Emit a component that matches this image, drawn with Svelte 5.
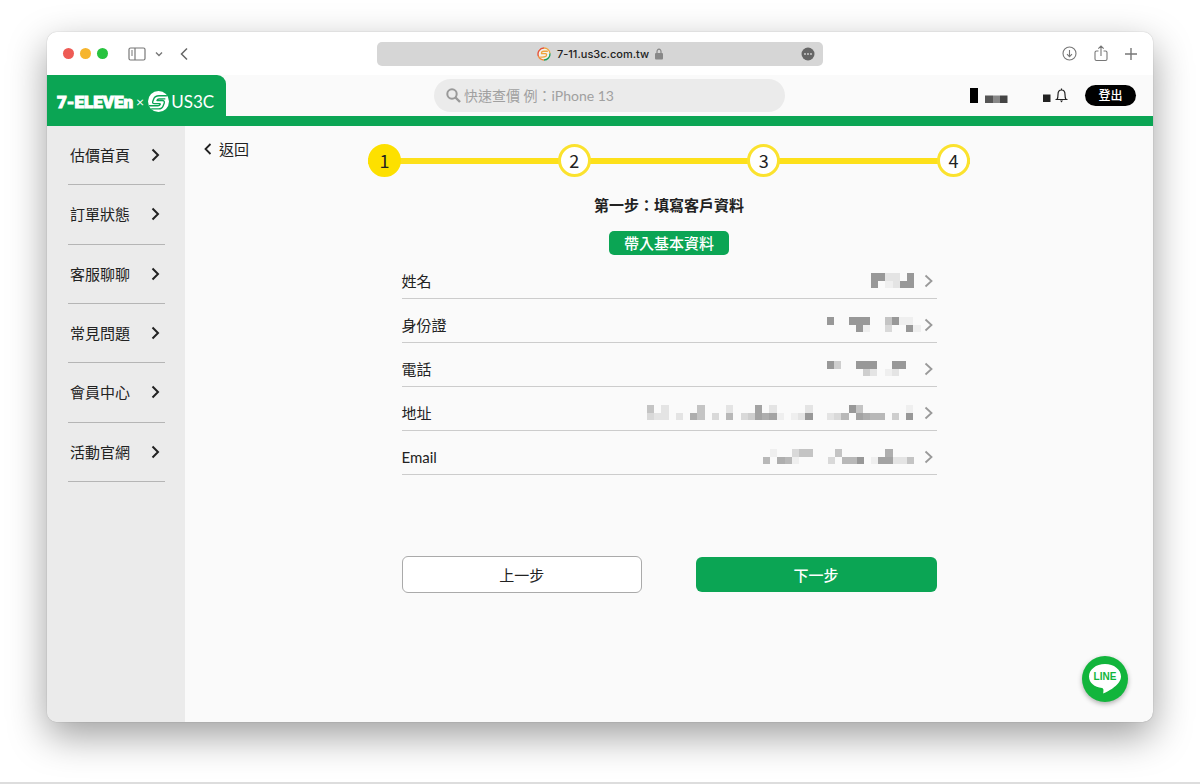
<script>
  const menu = ["估價首頁", "訂單狀態", "客服聊聊", "常見問題", "會員中心", "活動官網"];
  const steps = [1, 2, 3, 4];
  let current = $state(1);
  let keyword = $state("");

  // masked values: two rows of cells, each digit is how dark the cell is
  const fields = [
    { label: "姓名", mask: ["9922090", "9012990"] },
    { label: "身份證", mask: ["9009990059110", "0000910030091"] },
    { label: "電話", mask: ["9400999009900", "0000042012000"] },
    {
      label: "地址",
      mask: [
        "50200005000200080200002000009500000010",
        "32202075030603487810129002360876604090",
      ],
    },
    {
      label: "Email",
      mask: ["0100355000500000070000", "6076100003066901882250"],
    },
  ];

  function next() {
    if (current < steps.length) current += 1;
  }

  function previous() {
    if (current > 1) current -= 1;
  }
</script>

<div class="desktop">
  <div class="window">
    <div class="titlebar">
      <div class="controls">
        <span class="light red"></span>
        <span class="light yellow"></span>
        <span class="light green"></span>
        <button class="tool sidebar-toggle" aria-label="Sidebar">
          <svg width="18" height="14" viewBox="0 0 18 14" fill="none" stroke="#777" stroke-width="1.2">
            <rect x="1" y="1" width="16" height="12" rx="1.5" />
            <path d="M7 1V13M3 4H5M3 6H5M3 8H5" />
          </svg>
        </button>
        <button class="tool tabs-toggle" aria-label="Tab groups">
          <svg width="8" height="6" viewBox="0 0 8 6" fill="none" stroke="#777" stroke-width="1.4">
            <path d="M1 1.5L4 4.5L7 1.5" />
          </svg>
        </button>
        <button class="tool" aria-label="Back">
          <svg width="8" height="14" viewBox="0 0 8 14" fill="none" stroke="#666" stroke-width="1.5">
            <path d="M7 1.5L1.500 7L7 12.5" />
          </svg>
        </button>
      </div>
      <div class="address">
        <svg width="14" height="14" viewBox="0 0 40 40" fill="none" stroke-width="4">
          <circle cx="20" cy="20" r="18" fill="#f2f2ea" />
          <path d="M20 3A17 17 0 0 0 4 26" stroke="#e5533b" />
          <path d="M20 3A17 17 0 0 1 37 18" stroke="#f0a43c" />
          <path d="M37 18A17 17 0 0 1 20 37" stroke="#1b9c5b" />
          <path d="M20 37A17 17 0 0 1 4 26" stroke="#ef8b3a" />
          <path d="M31 12H20Q12 12 13 19H25Q29 20 26 26Q24 29 9 29" stroke="#f0a43c" />
        </svg>
        <span>7-11.us3c.com.tw</span>
        <svg width="8" height="12" viewBox="0 0 8 12">
          <path d="M2 6V3.500a2 2.300 0 0 1 4 0V6" fill="none" stroke="#888" stroke-width="1.2" />
          <rect y="5" width="8" height="6.5" rx="1" fill="#888" />
        </svg>
        <button class="tool more" aria-label="More">
          <svg width="14" height="14" viewBox="0 0 14 14">
            <circle cx="7" cy="7" r="6.5" fill="#666" />
            <g fill="#d6d6d6">
              <circle cx="4" cy="7" r="0.9" />
              <circle cx="7" cy="7" r="0.9" />
              <circle cx="10" cy="7" r="0.9" />
            </g>
          </svg>
        </button>
      </div>
      <div class="actions">
        <button class="tool" aria-label="Downloads">
          <svg width="15" height="15" viewBox="0 0 15 15" fill="none" stroke="#777" stroke-width="1.1">
            <circle cx="7.5" cy="7.5" r="6.5" />
            <path d="M7.5 4V10.500M5 8.200L7.500 10.700L10 8.200" />
          </svg>
        </button>
        <button class="tool" aria-label="Share">
          <svg width="14" height="17" viewBox="0 0 14 17" fill="none" stroke="#777" stroke-width="1.1">
            <path d="M4.500 6H2.500Q1 6 1 7.500V14Q1 15.500 2.500 15.500H11.500Q13 15.500 13 14V7.500Q13 6 11.500 6H9.500M7 11V1.200M4.300 3.700L7 1L9.700 3.700" />
          </svg>
        </button>
        <button class="tool" aria-label="New tab">
          <svg width="12" height="12" viewBox="0 0 12 12" stroke="#777" stroke-width="1.4">
            <path d="M6 0V12M0 6H12" />
          </svg>
        </button>
      </div>
    </div>

    <header>
      <a class="brand" href="#home">
        <span class="seven">7-ELEVEn</span>
        <span class="times">×</span>
        <svg class="emblem" viewBox="0 0 40 40" aria-hidden="true">
          <circle cx="20" cy="20" r="20" fill="#fff" />
          <g fill="none" stroke="#0ba554" stroke-width="2.6" stroke-linejoin="round">
            <path d="M36 9H21Q13 9 11 15L9 20Q8 24 12 24H22Q24 24 23 26Q22 28 19 28H2" />
            <path d="M33 15H21Q18 15 17 18H27Q32 18 31 23L29 28Q27 34 20 34H6" />
          </g>
        </svg>
        <span class="us3c">US3C</span>
      </a>
      <label class="search">
        <svg width="15" height="15" viewBox="0 0 15 15" fill="none" stroke="#999" stroke-width="2">
          <circle cx="6" cy="6" r="4.7" />
          <path d="M9.5 9.5L14 14" stroke-width="2.4" />
        </svg>
        <input type="text" aria-label="快速查價" placeholder="快速查價 例：iPhone 13" bind:value={keyword} />
      </label>
      <div class="account">
        <svg width="38" height="15" viewBox="0 0 38 15" aria-hidden="true">
          <rect width="8" height="15" />
          <rect x="15" y="7.5" width="8" height="7.5" fill="#555" />
          <rect x="23" y="7.5" width="7" height="7.5" fill="#888" />
          <rect x="30" y="7.5" width="7.5" height="7.5" fill="#444" />
        </svg>
        <button class="tool bell" aria-label="通知">
          <svg width="25" height="15" viewBox="0 0 25 15" fill="none" stroke="#222" stroke-width="1.2">
            <rect x="0" y="6.5" width="7.5" height="7.5" fill="#222" stroke="none" />
            <path d="M12.5 11.5H24.5M14 11.5Q15 10 15 6.500Q15 2 18.500 2Q22 2 22 6.500Q22 10 23 11.500M18.500 0.500V2" />
            <path d="M17 12.5H20L18.500 14.500Z" fill="#222" stroke="none" />
          </svg>
        </button>
        <button class="logout">登出</button>
      </div>
    </header>

    <div class="body">
      <nav>
        {#each menu as item}
          <a href="#{item}">
            {item}
            <svg width="9" height="14" viewBox="0 0 9 14" fill="none" stroke="#222" stroke-width="2">
              <path d="M1.5 1.5L7 7L1.5 12.5" />
            </svg>
          </a>
        {/each}
      </nav>

      <main>
        <a class="back" href="#back">
          <svg width="8" height="12" viewBox="0 0 8 12" fill="none" stroke="#222" stroke-width="1.8">
            <path d="M6.5 1L1.5 6L6.5 11" />
          </svg>
          返回
        </a>
        <div class="content">
          <ol class="steps">
            {#each steps as step}
              <li class:active={step <= current}>{step}</li>
            {/each}
          </ol>
          <h1>第一步：填寫客戶資料</h1>
          <button class="fill">帶入基本資料</button>

          <div class="fields">
            {#each fields as field}
              <button class="field">
                <span>{field.label}</span>
                <svg class="mask" width={Math.round(field.mask[0].length * 7.2)} height="15" aria-hidden="true">
                  {#each field.mask as row, y}
                    {#each row as level, x}
                      {#if level !== "0"}
                        <rect x={x * 7.2} y={y * 7.5} width="7.2" height="7.5" opacity={level / 9} />
                      {/if}
                    {/each}
                  {/each}
                </svg>
                <svg width="9" height="14" viewBox="0 0 9 14" fill="none" stroke="#999" stroke-width="1.8">
                  <path d="M1.5 1.5L7.5 7L1.5 12.5" />
                </svg>
              </button>
            {/each}
          </div>

          <div class="buttons">
            <button class="previous" onclick={previous}>上一步</button>
            <button class="next" onclick={next}>下一步</button>
          </div>
        </div>
      </main>
    </div>

    <button class="line-chat" aria-label="LINE">
      <svg width="46" height="46" viewBox="0 0 46 46">
        <path d="M23 8C14 8 7 13.500 7 20.500C7 27 12.500 31 20 32C22 32.500 21.500 34.500 21.200 37.500C27 35 39 28.500 39 20.500C39 13.500 32 8 23 8Z" fill="#fff" />
        <text x="23" y="24" text-anchor="middle">LINE</text>
      </svg>
    </button>
  </div>
</div>

<style>
  :global(body) {
    margin: 0;
    background: #fff;
  }

  .desktop {
    display: flex;
    box-sizing: border-box;
    min-height: 100vh;
    padding: 32px 47px 60px;
    border-bottom: 2px solid #ddd;
    font-family: Lato, "Noto Sans CJK TC", sans-serif;
    font-size: 15px;
    line-height: 22px;
    color: #222;
  }

  .window {
    position: relative;
    display: flex;
    flex-direction: column;
    flex: 1;
    min-width: 0;
    border-radius: 10px;
    overflow: hidden;
    background: #fafafa;
    box-shadow: 0 0 1px rgba(0, 0, 0, 0.4), 0 14px 38px rgba(0, 0, 0, 0.38);
  }

  button {
    padding: 0;
    border: none;
    background: none;
    font: inherit;
    color: inherit;
    cursor: pointer;
  }

  a {
    color: inherit;
    text-decoration: none;
  }

  svg {
    display: block;
    flex: none;
  }

  .titlebar {
    display: grid;
    grid-template-columns: 1fr minmax(0, 446px) 1fr;
    align-items: center;
    height: 43px;
    background: #fff;
  }

  .controls,
  .actions {
    display: flex;
    align-items: center;
  }

  .controls {
    padding-left: 16px;
  }

  .light {
    width: 11px;
    height: 11px;
    margin-right: 6px;
    border-radius: 50%;
  }

  .red {
    background: #ee5b55;
  }

  .yellow {
    background: #f6b52e;
  }

  .green {
    background: #27c33f;
  }

  .sidebar-toggle {
    margin-left: 14px;
  }

  .tabs-toggle {
    margin: 0 17px 0 9px;
  }

  .address {
    display: grid;
    grid-template-columns: 1fr auto auto auto 1fr;
    align-items: center;
    gap: 6px;
    height: 24px;
    border-radius: 5px;
    background: #d6d6d6;
    font-family: Inter, sans-serif;
    font-size: 11px;
    font-weight: 500;
  }

  .address > svg:first-child {
    grid-column: 2;
  }

  .more {
    justify-self: end;
    margin-right: 8px;
  }

  .actions {
    justify-content: flex-end;
    gap: 17px;
    padding-right: 16px;
  }

  header {
    display: grid;
    grid-template-columns: 179px 13fr minmax(0, 351px) 23fr;
    align-items: center;
    height: 41px;
    border-bottom: 10px solid #0ba554;
  }

  .brand {
    display: flex;
    align-items: center;
    box-sizing: border-box;
    height: 41px;
    padding: 12px 0 0 10px;
    border-top-right-radius: 9px;
    background: #0ba554;
    color: #fff;
  }

  .seven {
    font-family: Roboto, sans-serif;
    font-size: 17px;
    font-weight: 900;
    -webkit-text-stroke: 1px #fff;
  }

  .times {
    margin: 0 4px 0 3px;
    font-size: 14px;
  }

  .emblem {
    width: 21px;
    height: 21px;
    margin-right: 2px;
  }

  .us3c {
    font-size: 17px;
  }

  .search {
    grid-column: 3;
    display: flex;
    align-items: center;
    gap: 3px;
    height: 33px;
    padding-left: 12px;
    border-radius: 17px;
    background: #ebebeb;
  }

  .search input {
    flex: 1;
    min-width: 0;
    padding: 0;
    border: none;
    outline: none;
    background: none;
    font: inherit;
    font-size: 14px;
  }

  .search input::placeholder {
    color: #a0a0a0;
    opacity: 1;
  }

  .account {
    display: flex;
    align-items: center;
    justify-content: flex-end;
    padding-right: 17px;
  }

  .bell {
    margin: 0 17px 0 35px;
  }

  .logout {
    width: 51px;
    height: 21px;
    border-radius: 11px;
    background: #000;
    color: #fff;
    font-size: 12px;
    font-weight: 500;
    line-height: 20px;
  }

  .body {
    display: flex;
    flex: 1;
  }

  nav {
    display: grid;
    grid-template-rows: repeat(6, 1fr);
    align-self: stretch;
    flex: none;
    box-sizing: border-box;
    width: 138px;
    padding: 0 20px 240px 21px;
    background: #ebebeb;
  }

  nav a {
    display: flex;
    align-items: center;
    justify-content: space-between;
    min-height: 58px;
    padding: 0 5px 0 2px;
    border-bottom: 1px solid #b5b5b5;
  }

  main {
    display: grid;
    grid-template-columns: 1fr minmax(0, 602px) 1fr;
    align-items: start;
    flex: 1;
    min-width: 0;
  }

  .back {
    display: flex;
    align-items: center;
    gap: 7px;
    padding: 12px 0 0 19px;
  }

  .content {
    display: flex;
    flex-direction: column;
    align-items: center;
    padding-top: 18px;
  }

  .steps {
    display: flex;
    justify-content: space-between;
    align-self: stretch;
    margin: 0;
    padding: 0;
    list-style: none;
    background: linear-gradient(#fde01a, #fde01a) center / 100% 6px no-repeat;
  }

  .steps li {
    box-sizing: border-box;
    width: 33px;
    height: 33px;
    border: 3px solid #fbe22e;
    border-radius: 50%;
    background: #fff;
    font-family: "Noto Sans CJK TC", sans-serif;
    font-size: 18px;
    line-height: 27px;
    text-align: center;
  }

  .steps li.active {
    border-color: #fde000;
    background: #fde000;
  }

  h1 {
    margin: 17px 0 15px;
    font-size: 15px;
    font-weight: 700;
    line-height: 22px;
  }

  .fill {
    width: 120px;
    height: 24px;
    border-radius: 5px;
    background: #0ba554;
    color: #fff;
    font-weight: 500;
  }

  .fields {
    width: 100%;
    max-width: 535px;
  }

  .field {
    display: flex;
    align-items: center;
    box-sizing: border-box;
    width: 100%;
    height: 44px;
    padding: 8px 4px 0 0;
    border-bottom: 1px solid #ccc;
  }

  .mask {
    margin: 0 3px 0 auto;
    fill: #989898;
    shape-rendering: crispEdges;
  }

  .buttons {
    display: flex;
    align-items: center;
    justify-content: space-between;
    width: 100%;
    max-width: 535px;
    margin-top: 81px;
  }

  .previous,
  .next {
    width: 45%;
    height: 35px;
    border-radius: 6px;
  }

  .previous {
    height: 37px;
    border: 1px solid #aaa;
    background: #fff;
  }

  .next {
    background: #0ba554;
    color: #fff;
    font-weight: 500;
  }

  .line-chat {
    position: absolute;
    right: 25px;
    bottom: 20px;
    border-radius: 50%;
    background: #12b53c;
    box-shadow: 0 2px 5px rgba(0, 0, 0, 0.3);
  }

  .line-chat text {
    fill: #12b53c;
    font-family: "Liberation Sans", sans-serif;
    font-size: 10px;
    font-weight: 700;
  }
</style>
